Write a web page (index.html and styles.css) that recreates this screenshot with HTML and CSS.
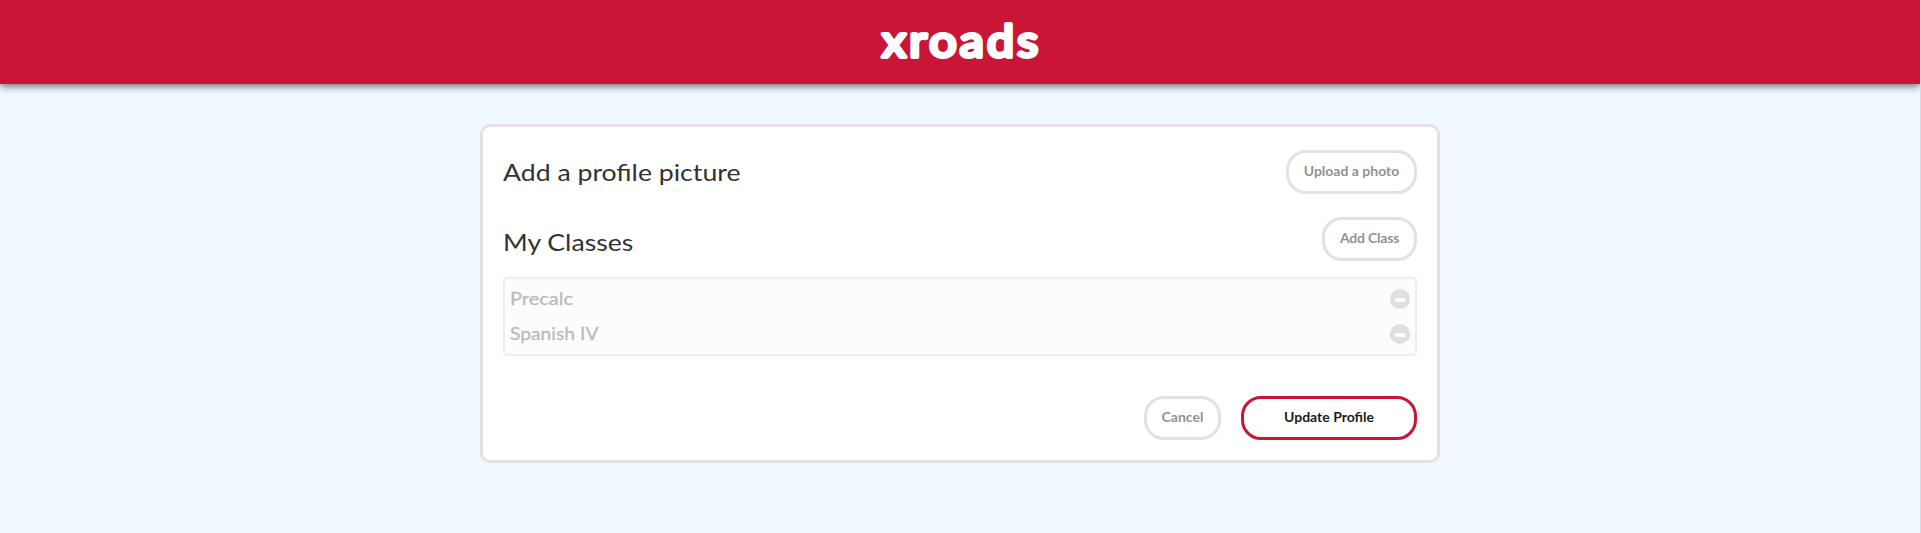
FILE: index.html
```html
<!DOCTYPE html>
<html lang="en">
<head>
<meta charset="utf-8">
<title>xroads</title>
<link rel="stylesheet" href="styles.css">
</head>
<body>
<header class="header">
  <svg class="logo" width="162" height="84" viewBox="0 0 162 84" role="img" aria-label="xroads"><text class="logo-text" x="3" y="57" textLength="159.5" lengthAdjust="spacingAndGlyphs">xroads</text></svg>
</header>
<main class="card">
  <section class="row picture">
    <h1 class="title">Add a profile picture</h1>
    <button class="btn upload">Upload a photo</button>
  </section>
  <section class="row classes">
    <h1 class="title low">My Classes</h1>
    <button class="btn add">Add Class</button>
  </section>
  <ul class="list">
    <li class="item"><span class="name">Precalc</span><svg width="20" height="20"><circle cx="10" cy="10" r="10" fill="#e0dedf"/><rect x="5" y="9" width="10.5" height="4" rx="1.5" fill="#fff"/></svg></li>
    <li class="item"><span class="name name-long">Spanish IV</span><svg width="20" height="20"><circle cx="10" cy="10" r="10" fill="#e0dedf"/><rect x="5" y="9" width="10.5" height="4" rx="1.5" fill="#fff"/></svg></li>
  </ul>
  <footer class="actions">
    <button class="btn cancel">Cancel</button>
    <button class="btn update">Update Profile</button>
  </footer>
</main>
</body>
</html>
```
FILE: styles.css
```css
* { box-sizing: border-box; }
html { background: #f0f8ff; }
body {
  margin: 0;
  min-height: 533px;
  border-right: 1px solid #d8dce2;
  font-family: Lato, sans-serif;
  color: #333;
}
.header {
  height: 84px;
  display: flex;
  justify-content: center;
  background: #c91536;
  box-shadow: 0 2px 8px rgba(0, 0, 0, .6);
}
.logo-text {
  font: 400 44px Lato, sans-serif;
  letter-spacing: 3px;
  fill: #fff;
  stroke: #fff;
  stroke-width: 4px;
  stroke-linejoin: round;
}
.card {
  width: 960px;
  height: 339px;
  margin: 40px 0 0 480px;
  padding: 23px 20px 0;
  border: 3px solid #e2e2e2;
  border-radius: 10px;
  background: #fff;
}
.row { display: flex; justify-content: space-between; height: 44px; }
.classes { margin-top: 23px; }
.title {
  margin: 0;
  font-size: 24px;
  font-weight: 400;
  line-height: 44px;
  transform: scaleX(1.11);
  transform-origin: left;
}
.low { padding-top: 3px; }
.btn {
  height: 44px;
  padding: 0 0 3px;
  border: 3px solid #e2e2e2;
  border-radius: 20px;
  background: #fff;
  color: #929292;
  font: 700 14px Lato, sans-serif;
  white-space: nowrap;
}
.upload { width: 131px; }
.add { width: 95px; letter-spacing: -.2px; }
.cancel { width: 77px; }
.update { width: 176px; border-color: #c91536; color: #1b1b1b; }
.list {
  height: 79px;
  margin: 16px 0 0;
  padding: 2px 5px;
  list-style: none;
  border: 2px solid #eee;
  border-radius: 4px;
  background: #fcfcfc;
}
.item {
  display: flex;
  align-items: center;
  justify-content: space-between;
  height: 35px;
  color: #bbb;
  font-size: 18px;
}
.name {
  padding-bottom: 2px;
  transform: scaleX(1.11);
  transform-origin: left;
  -webkit-text-stroke: .3px #bbb;
}
.name-long { transform: scaleX(1.07); }
.actions { display: flex; justify-content: flex-end; gap: 20px; margin-top: 40px; }
```
